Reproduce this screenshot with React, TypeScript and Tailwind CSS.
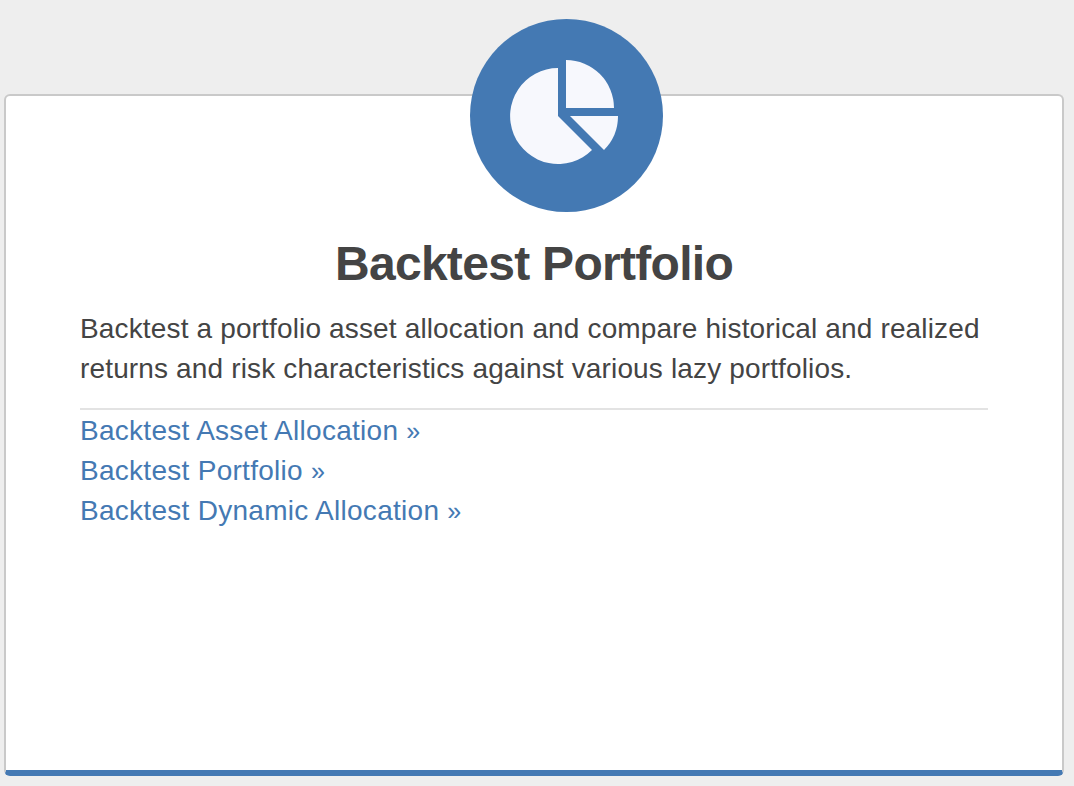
import React from 'react';

const links = [
  'Backtest Asset Allocation',
  'Backtest Portfolio',
  'Backtest Dynamic Allocation',
];

function PieIcon() {
  return (
    <svg viewBox="0 0 108 106" className="w-[108px] h-[106px]" fill="#f7f8fd">
      <path d="M48 8v48l34 34A48 48 0 1 1 48 8z" />
      <path d="M56 0a48 48 0 0 1 48 48H56z" />
      <path d="M60 56h48a48 48 0 0 1-14 34z" />
    </svg>
  );
}

export default function App() {
  return (
    <div className="h-[786px] w-[1074px] bg-[#eee] pt-[94px] pl-1 overflow-hidden font-['Liberation_Sans',Arial,sans-serif] text-[#444]">
      <div className="w-[1060px] h-[682px] bg-white border-2 border-[#c9c9c9] border-b-[6px] border-b-[#4479b3] rounded-md px-[74px]">
        <div className="w-[193px] h-[193px] -mt-[77px] ml-[389.5px] rounded-full bg-[#4479b3] pl-[40.5px] pt-[41px]">
          <PieIcon />
        </div>
        <h2 className="mt-[25px] h-[53px] text-center text-[48px] leading-[53px] font-bold tracking-[-0.7px] whitespace-nowrap">
          Backtest Portfolio
        </h2>
        <p className="mt-[19px] text-[28px] leading-10 tracking-[0.15px] whitespace-nowrap">
          Backtest a portfolio asset allocation and compare historical and realized
          <br />
          returns and risk characteristics against various lazy portfolios.
        </p>
        <hr className="mt-[19px] border-t-2 border-[#e3e3e3]" />
        <ul className="pt-px text-[28px] leading-10 text-[#4479b3]">
          {links.map((label) => (
            <li key={label} className="h-10">
              <a href="#" className="tracking-[0.28px]">
                {label} <span className="text-[25px]">»</span>
              </a>
            </li>
          ))}
        </ul>
      </div>
    </div>
  );
}
